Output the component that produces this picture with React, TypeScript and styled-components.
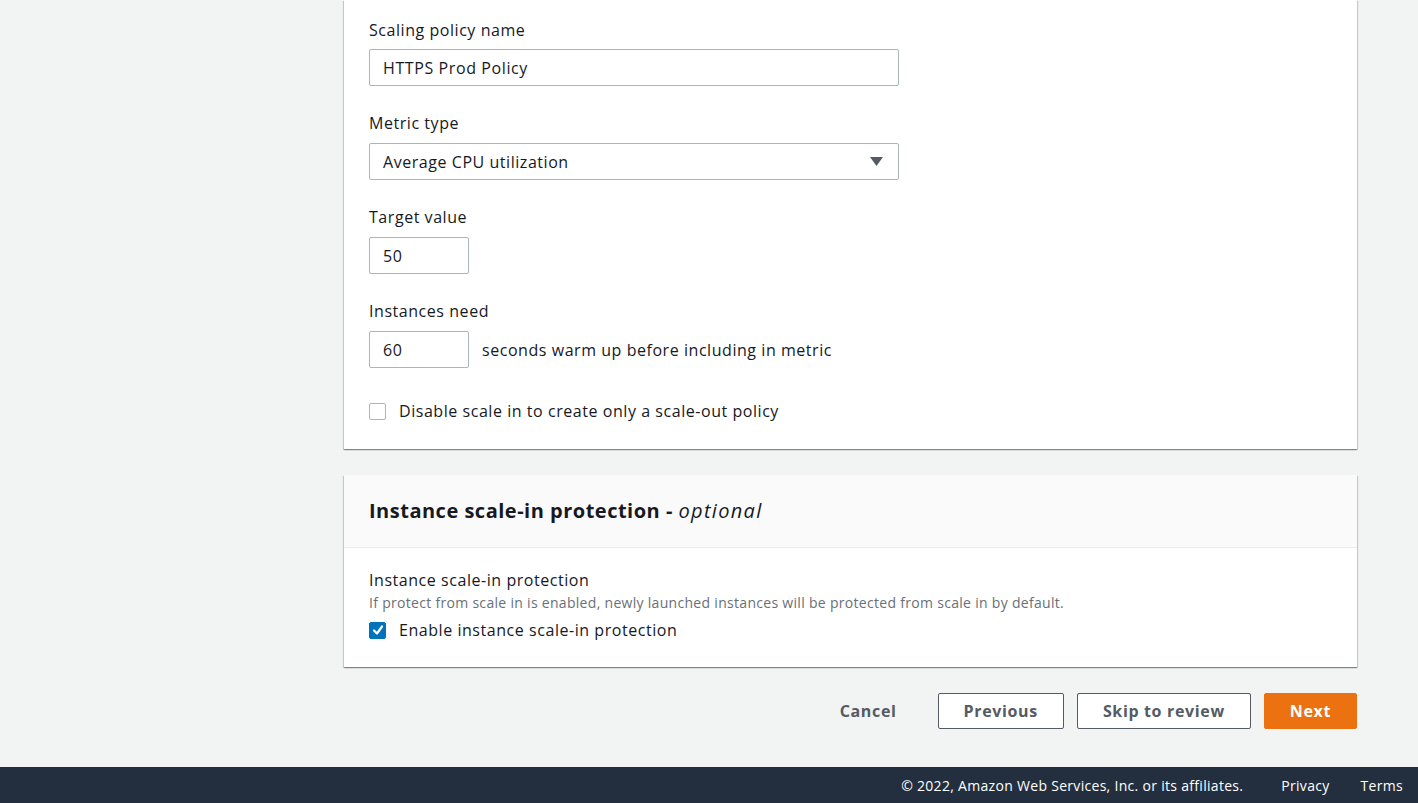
import React, { useState } from "react"
import styled, { createGlobalStyle } from 'styled-components'

const GlobalStyle = createGlobalStyle`
    html, body {
        margin: 0;
        padding: 0;
        background: #f2f3f3;
    }
    body {
        font-family: 'Open Sans', 'Liberation Sans', sans-serif;
        color: #16191f;
        letter-spacing: 0.55px;
        overflow: hidden;
    }
`

const Page = styled.div`
    min-height: 803px;
    display: flex;
    flex-direction: column;
`

const Main = styled.main`
    flex: 1;
    padding: 0 61px 38px 344px;
    display: flex;
    flex-direction: column;
    gap: 26px;
`

const Card = styled.section`
    background: #fff;
    box-shadow: 0 1px 1px 0 rgba(0, 28, 36, 0.3), 1px 1px 1px 0 rgba(0, 28, 36, 0.15), -1px 1px 1px 0 rgba(0, 28, 36, 0.15);
`

const CardHeader = styled.header`
    background: #fafafa;
    border-bottom: 1px solid #eaeded;
    padding: 24px 25px;
`

const CardTitle = styled.h2`
    margin: 0;
    font-size: 20px;
    line-height: 24px;
    font-weight: 700;
    letter-spacing: 0.5px;

    em {
        font-weight: 400;
        letter-spacing: 1.3px;
    }
`

const CardBody = styled.div<{ $top: number, $bottom: number }>`
    padding: ${p => p.$top}px 25px ${p => p.$bottom}px;
    display: flex;
    flex-direction: column;
`

const Field = styled.div<{ $last?: boolean }>`
    display: flex;
    flex-direction: column;
    margin-bottom: ${p => p.$last ? 0 : 26}px;
`

const Label = styled.label<{ $gap?: number }>`
    font-size: 16px;
    line-height: 22px;
    margin-bottom: ${p => p.$gap ?? 9}px;
`

const SectionLabel = styled.div`
    font-size: 16px;
    line-height: 22px;
`

const TextInput = styled.input<{ $width: number }>`
    box-sizing: border-box;
    width: ${p => p.$width}px;
    height: 37px;
    border: 1px solid #aab7b8;
    border-radius: 2px;
    padding: 0 13px;
    font-family: inherit;
    font-size: 16px;
    letter-spacing: 0.6px;
    color: #16191f;
    background: #fff;
    outline: none;
`

const InlineRow = styled.div`
    display: flex;
    align-items: center;
    gap: 13px;
    font-size: 16px;
`

const SelectBox = styled.div`
    box-sizing: border-box;
    width: 530px;
    height: 37px;
    border: 1px solid #aab7b8;
    border-radius: 2px;
    padding: 0 15px 0 13px;
    display: flex;
    align-items: center;
    justify-content: space-between;
    font-size: 16px;
    cursor: pointer;
`

const CheckRow = styled.label<{ $top: number }>`
    display: flex;
    align-items: center;
    gap: 13px;
    font-size: 16px;
    line-height: 22px;
    margin-top: ${p => p.$top}px;
    cursor: pointer;
`

const Box = styled.span<{ $checked: boolean }>`
    box-sizing: border-box;
    width: 17px;
    height: 17px;
    border-radius: 2px;
    border: 1px solid ${p => p.$checked ? '#0073bb' : '#aab7b8'};
    background: ${p => p.$checked ? '#0073bb' : '#fff'};
    display: flex;
    align-items: center;
    justify-content: center;
`

const Description = styled.div`
    font-size: 14px;
    line-height: 20px;
    letter-spacing: 0.3px;
    color: #687078;
    margin-top: 2px;
`

const Actions = styled.div`
    display: flex;
    justify-content: flex-end;
    align-items: center;
    gap: 13px;
`

const Button = styled.button<{ $variant: 'link' | 'normal' | 'primary' }>`
    box-sizing: border-box;
    height: 36px;
    padding: 0 25px;
    font-family: inherit;
    font-size: 16px;
    font-weight: 700;
    letter-spacing: 0.65px;
    border-radius: 2px;
    cursor: pointer;
    border: 1px solid ${p => p.$variant === 'normal' ? '#545b64' : p.$variant === 'primary' ? '#ec7211' : 'transparent'};
    background: ${p => p.$variant === 'primary' ? '#ec7211' : p.$variant === 'normal' ? '#fff' : 'transparent'};
    color: ${p => p.$variant === 'primary' ? '#fff' : '#545b64'};
    margin-right: ${p => p.$variant === 'link' ? '2px' : '0'};
`

const Footer = styled.footer`
    height: 36px;
    background: #232f3e;
    color: #fff;
    display: flex;
    justify-content: flex-end;
    align-items: center;
    padding-right: 15px;
    font-size: 14px;
    letter-spacing: 0.3px;
`

const FooterLink = styled.a<{ $gap: number }>`
    color: #fff;
    text-decoration: none;
    margin-left: ${p => p.$gap}px;
`

interface ICheckboxProps {
    checked: boolean
    setChecked: (value: boolean) => void
    top: number
    children?: React.ReactNode
}

const Checkbox = ({ checked, setChecked, top, children }: ICheckboxProps) => (
    <CheckRow $top={top} onClick={() => setChecked(!checked)}>
        <Box $checked={checked}>
            {checked && (
                <svg width="12" height="12" viewBox="0 0 12 12">
                    <polyline points="2,6.5 5,9.5 10,2.5" fill="none" stroke="#fff" strokeWidth="2.2" strokeLinecap="round" strokeLinejoin="round" />
                </svg>
            )}
        </Box>
        <span>{children}</span>
    </CheckRow>
)

export default function App() {
    const [disableScaleIn, setDisableScaleIn] = useState(false)
    const [protect, setProtect] = useState(true)

    return (
        <Page>
            <GlobalStyle />
            <Main>
                <Card>
                    <CardBody $top={19} $bottom={27}>
                        <Field>
                            <Label $gap={8}>Scaling policy name</Label>
                            <TextInput $width={530} defaultValue="HTTPS Prod Policy" />
                        </Field>
                        <Field>
                            <Label>Metric type</Label>
                            <SelectBox>
                                <span>Average CPU utilization</span>
                                <svg width="13" height="9" viewBox="0 0 13 9">
                                    <polygon points="0,0 13,0 6.5,9" fill="#545b64" />
                                </svg>
                            </SelectBox>
                        </Field>
                        <Field>
                            <Label>Target value</Label>
                            <TextInput $width={100} defaultValue="50" />
                        </Field>
                        <Field $last>
                            <Label>Instances need</Label>
                            <InlineRow>
                                <TextInput $width={100} defaultValue="60" />
                                <span>seconds warm up before including in metric</span>
                            </InlineRow>
                        </Field>
                        <Checkbox checked={disableScaleIn} setChecked={setDisableScaleIn} top={32}>
                            Disable scale in to create only a scale-out policy
                        </Checkbox>
                    </CardBody>
                </Card>

                <Card>
                    <CardHeader>
                        <CardTitle>Instance scale-in protection - <em>optional</em></CardTitle>
                    </CardHeader>
                    <CardBody $top={21} $bottom={26}>
                        <SectionLabel>Instance scale-in protection</SectionLabel>
                        <Description>If protect from scale in is enabled, newly launched instances will be protected from scale in by default.</Description>
                        <Checkbox checked={protect} setChecked={setProtect} top={6}>
                            Enable instance scale-in protection
                        </Checkbox>
                    </CardBody>
                </Card>

                <Actions>
                    <Button $variant="link">Cancel</Button>
                    <Button $variant="normal">Previous</Button>
                    <Button $variant="normal">Skip to review</Button>
                    <Button $variant="primary">Next</Button>
                </Actions>
            </Main>
            <Footer>
                <span>© 2022, Amazon Web Services, Inc. or its affiliates.</span>
                <FooterLink href="#" $gap={38}>Privacy</FooterLink>
                <FooterLink href="#" $gap={31}>Terms</FooterLink>
            </Footer>
        </Page>
    )
}
